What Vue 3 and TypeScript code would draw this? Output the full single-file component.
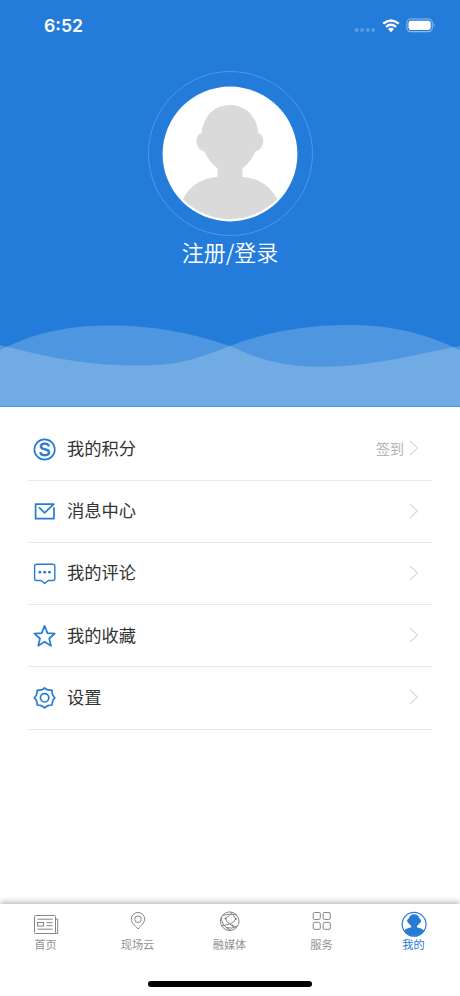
<script setup lang="ts">
interface MenuItem {
  icon: string
  label: string
  note?: string
}
interface Tab {
  icon: string
  label: string
  active?: boolean
}

const menu: MenuItem[] = [
  { icon: 'points', label: '我的积分', note: '签到' },
  { icon: 'mail', label: '消息中心' },
  { icon: 'comment', label: '我的评论' },
  { icon: 'star', label: '我的收藏' },
  { icon: 'gear', label: '设置' },
]

const tabs: Tab[] = [
  { icon: 'news', label: '首页' },
  { icon: 'pin', label: '现场云' },
  { icon: 'globe', label: '融媒体' },
  { icon: 'grid', label: '服务' },
  { icon: 'user', label: '我的', active: true },
]
</script>

<template>
  <div class="screen">
    <header class="hero">
      <div class="status">
        <span class="time">6:52</span>
        <div class="indicators">
          <svg class="dots" width="22" height="6" viewBox="0 0 22 6">
            <circle cx="2.6" cy="3" r="2" /><circle cx="8.2" cy="3" r="2" />
            <circle cx="13.8" cy="3" r="2" /><circle cx="19.2" cy="3" r="2" />
          </svg>
          <svg class="wifi" width="18" height="14" viewBox="0 0 18 14">
            <path d="M1.2 4.7Q9-1.9 16.8 4.7M4 7.8q5-4.2 10 0" />
            <path class="solid" d="M6 10q3-2.500 6 0L9 13.200z" />
          </svg>
          <svg class="battery" width="30" height="15" viewBox="0 0 30 15">
            <rect class="case" x=".9" y="1" width="25.400" height="12.600" rx="3.800" />
            <rect class="charge" x="2.500" y="2.700" width="22.200" height="9.200" rx="2.300" />
            <path class="cap" d="M27.600 5q2 2.200 0 4.500z" />
          </svg>
        </div>
      </div>
      <div class="profile">
        <div class="ring">
          <svg class="avatar" width="136" height="136" viewBox="0 0 136 136">
            <defs><clipPath id="face"><circle cx="68" cy="66.800" r="66.200" /></clipPath></defs>
            <circle cx="68" cy="68" r="67.400" fill="#fff" />
            <path clip-path="url(#face)" fill="#dadada" d="M68 19C82 19 92 28 95 40q1 3 1.200 7c4 1 5.800 5 4.800 10-1 5-4 7.500-7.500 8.500C90 73 86 78 80.500 82.500v8.500c18 1 29 11 34.500 22v24H21v-24c5.500-11 16.500-21 34.500-22v-8.500C50 78 46 73 42.500 65.500 38 64.500 35.500 61 34.700 57c-.7-5 1.300-9 5.100-10 .2-4 .2-4 1.200-7C44 28 54 19 68 19z" />
          </svg>
        </div>
        <div class="login">注册/登录</div>
      </div>
      <svg class="waves" width="460" height="88" viewBox="0 0 460 88">
        <path d="M0 32C37 14 68 7.500 112 7.500C158 7.500 197 17 230 28C260 42 283 48.700 322 48.700C370 48.700 413 37 460 28V88H0z" />
        <path d="M0 27C46 39 86 47.500 138 47.500C181 47.500 198 40 230 28C264 15 302 7 350 7C394 7 425 16 460 32V88H0z" />
      </svg>
    </header>

    <main class="menu">
      <div v-for="item in menu" :key="item.label" class="row">
        <svg class="icon" width="24" height="24" viewBox="0 0 24 24">
          <template v-if="item.icon === 'points'">
            <circle cx="11.600" cy="11.500" r="10.200" />
            <text x="11.600" y="17.600" text-anchor="middle">S</text>
          </template>
          <template v-else-if="item.icon === 'mail'">
            <path d="M21 7.200v11.500H2.600V4.200h18.200L11.600 12.800 6 7.300" />
          </template>
          <template v-else-if="item.icon === 'comment'">
            <path class="thin" d="M3.600 2.200h16.200q2 0 2 2v12.300q0 2-2 2h-4.500L11.700 21.500l-3.600-3H3.600q-2 0-2-2V4.200q0-2 2-2z" />
            <circle class="dot" cx="6.900" cy="10.200" r="1.400" /><circle class="dot" cx="11.700" cy="10.200" r="1.400" /><circle class="dot" cx="16.500" cy="10.200" r="1.400" />
          </template>
          <path v-else-if="item.icon === 'star'" d="m11.600 1.900 2.900 7.200 7.300.5-5.600 4.900 1.800 7.400-6.400-4.200-6.400 4.200L7 14.500 1.400 9.600l7.300-.5z" />
          <template v-else>
            <path d="M11.600 1.800q1.900 1.900 3.400 2.100 1.600.3 4 .4.100 2.500.5 3.900.5 1.400 2.300 3.600-1.700 1.700-2.100 3.200-.5 1.500-.7 4-2.400 0-3.900.6-1.400.6-3.500 2.200-2-1.600-3.500-2.200-1.500-.6-3.900-.6-.1-2.500-.6-4-.5-1.500-2.200-3.200 1.800-2.200 2.300-3.600.4-1.400.5-3.900 2.400-.1 4-.4 1.500-.2 3.400-2.100z" />
            <circle cx="11.600" cy="11.800" r="4.200" />
          </template>
        </svg>
        <span class="label">{{ item.label }}</span>
        <span v-if="item.note" class="note">{{ item.note }}</span>
        <svg class="chevron" width="10" height="16" viewBox="0 0 10 16"><path d="m1 1 7.500 7L1 15" /></svg>
      </div>
    </main>

    <footer class="bottom">
      <nav class="tabs">
        <div v-for="tab in tabs" :key="tab.label" class="tab" :class="{ active: tab.active }">
          <svg class="tab-icon" width="28" height="28" viewBox="0 0 28 28">
            <template v-if="tab.icon === 'news'">
              <rect x="2.500" y="5.500" width="21" height="18" rx="1" />
              <path d="M23.500 9h2.200v14.500H4M5.500 9.200h15M5.500 19.200h15M14.500 12.700h6M14.500 15.700h6" />
              <rect x="5.500" y="12.500" width="6" height="3.500" />
            </template>
            <template v-else-if="tab.icon === 'pin'">
              <path d="M14 19C11 15.500 7.300 12.800 7.300 9.200a6.700 6.700 0 0 1 13.400 0c0 3.600-3.700 6.300-6.700 9.800z" />
              <circle cx="14" cy="9.200" r="3.300" />
            </template>
            <template v-else-if="tab.icon === 'globe'">
              <circle cx="13.700" cy="11.200" r="9.300" />
              <path d="M7 5.300q6.500-2 13.800-.4M9.500 8.500Q12 15 20.500 17.300M19.800 9Q17 14.500 5.500 15.700M5.500 6.800q-.5 9.500 9.500 13.600M9.500 8.500Q14.500 5 16.500 2.500M19.800 9Q18 5.500 14.500 2.200M10 17.500q6 2 11.500-1.500" />
              <circle class="spot" cx="9.500" cy="8.500" r="1" /><circle class="spot" cx="19.800" cy="9" r="1" /><circle class="spot" cx="16.500" cy="15.600" r="1" />
            </template>
            <template v-else-if="tab.icon === 'grid'">
              <path d="M6.500 2.500h4.800q1 0 1 1v4q0 2-2 2H6.700q-1.500 0-1.500-1.500V3.800q0-1.300 1.300-1.300zM16.200 2.500H21q1.300 0 1.300 1.300V8q0 1.500-1.500 1.500h-3.600q-2 0-2-2v-4q0-1 1-1zM6.700 12.300h3.600q2 0 2 2v4q0 1-1 1H6.500q-1.300 0-1.300-1.300v-4.200q0-1.500 1.500-1.500zM17.200 12.300h3.600q1.500 0 1.500 1.500V18q0 1.300-1.300 1.300h-4.800q-1 0-1-1v-4q0-2 2-2z" />
            </template>
            <template v-else>
              <circle cx="14.100" cy="14.300" r="11.900" />
              <path class="figure" d="M14.100 4.300c3 0 4.700 2 5.400 4.200 2 1 2.200 2.800.7 4.200-1.300 1.200-2.200 2.500-3.200 3.400v1.300c2.900.3 5.300 1.300 7 3Q20.700 25.700 14.100 25.900 7.500 25.700 4.200 20.400c1.700-1.700 4.100-2.700 7-3v-1.300c-1-.9-1.900-2.200-3.200-3.400-1.500-1.400-1.300-3.200.7-4.200.7-2.200 2.400-4.200 5.400-4.200z" />
            </template>
          </svg>
          <span>{{ tab.label }}</span>
        </div>
      </nav>
      <div class="home-bar"></div>
    </footer>
  </div>
</template>

<style>
body {
  margin: 0;
}
</style>

<style scoped>
.screen {
  width: 460px;
  height: 996px;
  display: flex;
  flex-direction: column;
  overflow: hidden;
  background: #fff;
  font-family: "Noto Sans CJK SC", sans-serif;
}
svg {
  display: block;
  flex: none;
  fill: none;
}
.hero {
  height: 407px;
  flex: none;
  display: flex;
  flex-direction: column;
  box-sizing: border-box;
  background: #247cda;
  border-bottom: 1px solid #5595d7;
}
.status {
  height: 51px;
  flex: none;
  display: flex;
  align-items: center;
  justify-content: space-between;
  padding: 0 24px 0 44px;
  color: #fff;
}
.time {
  font: 600 17.700px/24px Inter, sans-serif;
}
.indicators {
  display: flex;
  align-items: center;
}
.dots {
  margin: 9px 6px 0 0;
  fill: #579be4;
}
.wifi {
  margin-right: 6px;
  stroke: #fff;
  stroke-width: 2.400;
}
.wifi .solid {
  fill: #fff;
  stroke: none;
}
.battery .case {
  stroke: #8bbaea;
  stroke-width: 1.100;
}
.battery .charge {
  fill: #fff;
}
.battery .cap {
  fill: #8bbaea;
}
.profile {
  display: flex;
  flex-direction: column;
  align-items: center;
  padding-top: 20px;
}
.ring {
  width: 165px;
  height: 165px;
  box-sizing: border-box;
  display: flex;
  align-items: center;
  justify-content: center;
  border: 1px solid #4e99e9;
  border-radius: 50%;
}
.login {
  margin-top: -1px;
  color: #fff;
  font-size: 22px;
  font-weight: 350;
  line-height: 32px;
}
.waves {
  margin-top: auto;
  fill: #fafff4;
  fill-opacity: .2;
}
.menu {
  flex: 1;
  padding: 11.600px 28px 0;
}
.row {
  height: 62.200px;
  box-sizing: border-box;
  display: flex;
  align-items: center;
  padding: 0 13px 0 5px;
  border-bottom: 1px solid #e9e9e9;
}
.icon {
  margin-top: 1px;
  stroke: #267bd5;
  stroke-width: 1.700;
  stroke-linejoin: round;
}
.icon text {
  font: 17.500px "Liberation Sans", sans-serif;
  fill: #267bd5;
  stroke-width: .8;
}
.icon .thin {
  stroke-width: 1.400;
}
.icon .dot {
  fill: #267bd5;
  stroke: none;
}
.label {
  flex: 1;
  margin: -2.500px 0 0 10px;
  color: #333;
  font-size: 17.300px;
  line-height: 26px;
}
.note {
  margin: -2.500px 5px 0 0;
  color: #b3b3b3;
  font-size: 14px;
  line-height: 20px;
}
.chevron {
  margin-top: -1.500px;
  stroke: #c4c4c4;
  stroke-width: 1;
}
.bottom {
  height: 92px;
  flex: none;
  display: flex;
  flex-direction: column;
  align-items: center;
  background: #fff;
  box-shadow: 0 -2px 6px rgba(0, 0, 0, .28);
}
.tabs {
  width: 460px;
  height: 77px;
  display: flex;
}
.tab {
  flex: 1;
  display: flex;
  flex-direction: column;
  align-items: center;
  padding: 6px 1px 0 0;
  color: #929292;
  font-size: 11.200px;
  line-height: 16px;
}
.tab span {
  margin-top: -2.500px;
}
.tab-icon {
  stroke: #858585;
  stroke-width: 1;
}
.tab-icon .spot {
  fill: #777;
  stroke: none;
}
.active {
  color: #277bd5;
}
.active .tab-icon {
  stroke: #277bd5;
  stroke-width: 1.200;
}
.active .figure {
  fill: #277bd5;
  stroke: none;
}
.home-bar {
  width: 164px;
  height: 6px;
  border-radius: 3px;
  background: #000;
}
</style>
